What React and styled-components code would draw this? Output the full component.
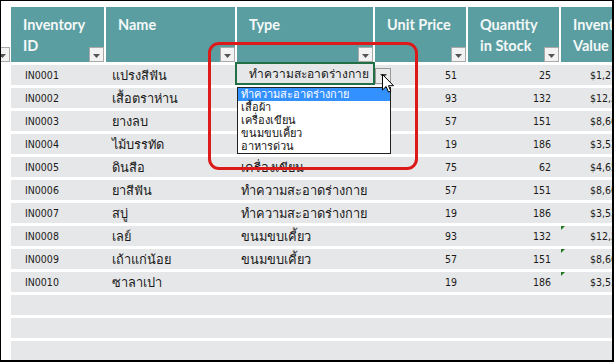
import React from 'react';
import styled, {createGlobalStyle} from 'styled-components';

const GlobalStyle = createGlobalStyle`
    body {
        margin: 0;
        background: #ffffff;
    }
`;

const COLS = '10px 95px 131px 138px 93px 93px 110px';

const columns = [
    {key: 'id', label: ['Inventory', 'ID']},
    {key: 'name', label: ['Name']},
    {key: 'type', label: ['Type']},
    {key: 'price', label: ['Unit Price']},
    {key: 'qty', label: ['Quantity', 'in Stock']},
    {key: 'value', label: ['Inventory', 'Value']},
];

const items = [
    ['IN0001', 'แปรงสีฟัน', '', 51, 25],
    ['IN0002', 'เสื้อตราห่าน', 'เสื้อผ้า', 93, 132],
    ['IN0003', 'ยางลบ', 'เครื่องเขียน', 57, 151],
    ['IN0004', 'ไม้บรรทัด', 'เครื่องเขียน', 19, 186],
    ['IN0005', 'ดินสือ', 'เครื่องเขียน', 75, 62],
    ['IN0006', 'ยาสีฟัน', 'ทำความสะอาดร่างกาย', 57, 151],
    ['IN0007', 'สบู่', 'ทำความสะอาดร่างกาย', 19, 186],
    ['IN0008', 'เลย์', 'ขนมขบเคี้ยว', 93, 132, true],
    ['IN0009', 'เถ้าแก่น้อย', 'ขนมขบเคี้ยว', 57, 151, true],
    ['IN0010', 'ซาลาเปา', '', 19, 186, true],
];

const typeOptions = ['ทำความสะอาดร่างกาย', 'เสื้อผ้า', 'เครื่องเขียน', 'ขนมขบเคี้ยว', 'อาหารด่วน'];

const money = (n) => '$' + n.toLocaleString('en-US', {minimumFractionDigits: 2});

const FilterButton = () => (
    <FilterBox>
        <svg width="7" height="4" viewBox="0 0 7 4"><path d="M0 0h7L3.5 4z" fill="#555"/></svg>
    </FilterBox>
);

const Cursor = () => (
    <CursorSvg width="13" height="20" viewBox="0 0 13 20">
        <path d="M0.5 0.5v15.5l3.6-3.5 2.4 5.6 2.3-1-2.3-5.4h5z" fill="#fff" stroke="#000" strokeWidth="1"/>
    </CursorSvg>
);

const App = () => {
    const emptyRows = [0, 1, 2];
    return (
        <>
            <GlobalStyle/>
            <Frame>
                <HeaderRow>
                    <SideHeader><FilterButton/></SideHeader>
                    {columns.map(c => (
                        <HeaderCell key={c.key}>
                            <HeaderText>
                                {c.label.map((l, i) => <div key={i}>{l}</div>)}
                            </HeaderText>
                            <FilterButton/>
                        </HeaderCell>
                    ))}
                </HeaderRow>

                {items.map(([id, name, type, price, qty, flag]) => (
                    <Row key={id}>
                        <Side/>
                        <Cell $pad="14px">{id}</Cell>
                        <Cell $pad="6px" $thai>{name}</Cell>
                        <Cell $pad="4px" $thai>{type}</Cell>
                        <Cell $right $pad="11px">{price}</Cell>
                        <Cell $right $pad="10px">{qty}</Cell>
                        <Cell $pad="29px">
                            {flag && <ErrorMark/>}
                            {money(price * qty)}
                        </Cell>
                    </Row>
                ))}
                {emptyRows.map(i => (
                    <Row key={`e${i}`}>
                        <Side/>
                        <Cell/><Cell/><Cell/><Cell/><Cell/><Cell/>
                    </Row>
                ))}

                {/* data validation dropdown open on the Type cell */}
                <Editor>ทำความสะอาดร่างกาย</Editor>
                <DropButton>
                    <svg width="7" height="4" viewBox="0 0 7 4"><path d="M0 0h7L3.5 4z" fill="#444"/></svg>
                </DropButton>
                <ListBox>
                    {typeOptions.map((o, i) => (
                        <ListItem key={o} $active={i === 0}>{o}</ListItem>
                    ))}
                </ListBox>
                <Cursor/>
                <Highlight/>
            </Frame>
        </>
    );
};

export default App;

const Frame = styled.div`
    position: relative;
    width: 614px;
    height: 362px;
    box-sizing: border-box;
    border-top: 1px solid #000;
    border-left: 1px solid #000;
    border-right: 2px solid #000;
    border-bottom: 2px solid #000;
    padding-top: 6px;
    overflow: hidden;
    background: #fff;
    font-family: "DejaVu Sans Condensed", "DejaVu Sans", Tahoma, sans-serif;
    font-size: 10.5px;
    color: #1a1a1a;
`;

const HeaderRow = styled.div`
    display: grid;
    grid-template-columns: ${COLS};
    height: 55px;
`;

const SideHeader = styled.div`
    display: flex;
    align-items: flex-end;
    justify-content: flex-end;
    padding-right: 1px;
    margin-left: -8px;
`;

const HeaderCell = styled.div`
    display: flex;
    justify-content: space-between;
    align-items: flex-end;
    background: #5b9ea1;
    margin-right: 2.5px;
    overflow: hidden;
`;

const HeaderText = styled.div`
    align-self: flex-start;
    padding: 7px 0 0 12px;
    font-family: Lato, "Open Sans", sans-serif;
    font-weight: 700;
    font-size: 14.5px;
    line-height: 21px;
    color: #f3f8f8;
    white-space: nowrap;
`;

const FilterBox = styled.div`
    flex: none;
    width: 15px;
    height: 15px;
    box-sizing: border-box;
    border: 1px solid #a9a9a9;
    background: #f2f2f2;
    display: flex;
    align-items: center;
    justify-content: center;
    padding-top: 2px;
`;

const Row = styled.div`
    display: grid;
    grid-template-columns: ${COLS};
    height: 20px;
    margin-top: 3px;
`;

const Side = styled.div`
    background: #fff;
`;

const Cell = styled.div`
    position: relative;
    background: #e6e7e8;
    display: flex;
    align-items: center;
    justify-content: ${p => (p.$right ? 'flex-end' : 'flex-start')};
    padding-left: ${p => (p.$right ? '0' : p.$pad || '0')};
    padding-right: ${p => (p.$right ? p.$pad : '0')};
    font-size: ${p => (p.$thai ? '12.8px' : '10.5px')};
    white-space: nowrap;
    overflow: hidden;
`;

const ErrorMark = styled.span`
    position: absolute;
    left: 0;
    top: 0;
    width: 0;
    height: 0;
    border-top: 4px solid #1f7a1f;
    border-right: 4px solid transparent;
`;

const Editor = styled.div`
    position: absolute;
    left: 234px;
    top: 61px;
    width: 140px;
    height: 23px;
    box-sizing: border-box;
    border: 2px solid #227045;
    background: #e6e7e8;
    display: flex;
    align-items: center;
    padding-left: 12px;
    font-size: 12px;
    white-space: nowrap;
`;

const DropButton = styled.div`
    position: absolute;
    left: 374px;
    top: 67px;
    width: 16px;
    height: 16px;
    box-sizing: border-box;
    border: 1px solid #9a9a9a;
    background: #e9e9e9;
    display: flex;
    align-items: center;
    justify-content: center;
`;

const ListBox = styled.div`
    position: absolute;
    left: 236px;
    top: 86px;
    width: 154px;
    height: 67px;
    box-sizing: border-box;
    border: 1px solid #222;
    background: #fff;
    font-size: 11px;
`;

const ListItem = styled.div`
    height: 13px;
    line-height: 13px;
    padding-left: 3px;
    white-space: nowrap;
    background: ${p => (p.$active ? '#3390ff' : 'transparent')};
    color: ${p => (p.$active ? '#fff' : '#111')};
`;

const CursorSvg = styled.svg`
    position: absolute;
    left: 381px;
    top: 73px;
`;

const Highlight = styled.div`
    position: absolute;
    left: 207px;
    top: 41px;
    width: 210px;
    height: 128px;
    box-sizing: border-box;
    border: 3.5px solid #dd1a1a;
    border-radius: 11px;
    pointer-events: none;
`;
